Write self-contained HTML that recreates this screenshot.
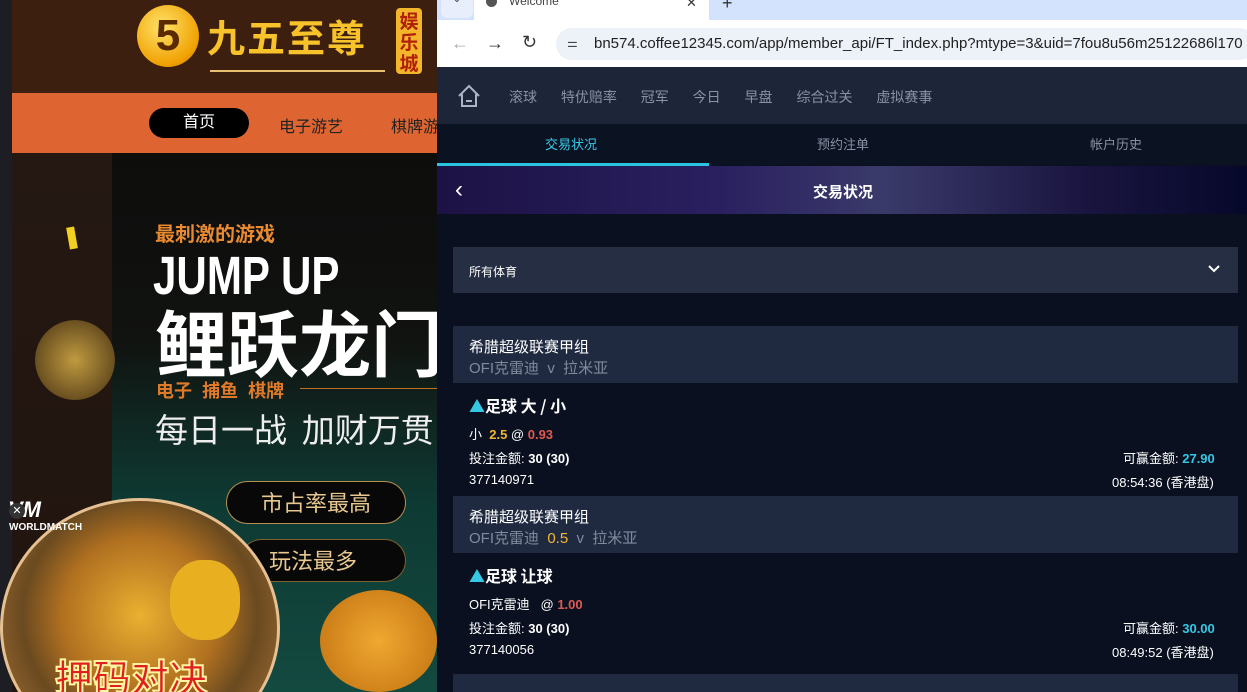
<!DOCTYPE html><html><head><meta charset="utf-8"><style>
*{margin:0;padding:0;box-sizing:border-box}
html,body{width:1247px;height:692px;overflow:hidden}
body{position:relative;background:#0a1020;font-family:"Liberation Sans","Noto Sans CJK SC",sans-serif}
.a{position:absolute}
.r{color:#fff;font-size:13px}
#L{position:absolute;left:0;top:0;width:437px;height:692px;overflow:hidden}
</style></head><body>
<div id="L">
<div class="a" style="left:0;top:0;width:12px;height:692px;background:#1c1e24"></div>
<div class="a" style="left:12px;top:0;width:425px;height:93px;background:#3d1f10"></div>
<div class="a" style="left:137px;top:5px;width:62px;height:62px;border-radius:50%;background:radial-gradient(circle at 40% 35%,#ffe36a,#f0a000 70%,#c07000);color:#5a2a00;font:bold 44px 'Liberation Sans';text-align:center;line-height:62px">5</div>
<div class="a" style="left:207px;top:14px;font:bold 38px 'Noto Sans CJK SC',sans-serif;color:#f7c22a;letter-spacing:2px;line-height:44px">九五至尊</div>
<div class="a" style="left:396px;top:8px;width:26px;height:66px;background:#f3b52a;border-radius:4px;color:#b0200a;font:bold 19px 'Noto Sans CJK SC',sans-serif;line-height:21px;text-align:center;padding-top:2px">娱<br>乐<br>城</div>
<div class="a" style="left:210px;top:70px;width:175px;height:2px;background:#e8c070"></div>
<div class="a" style="left:12px;top:93px;width:425px;height:60px;background:#de6532"></div>
<div class="a" style="left:149px;top:108px;width:100px;height:30px;border-radius:15px;background:#000;color:#fff;font-size:16px;text-align:center;line-height:30px">首页</div>
<div class="a" style="left:279px;top:113px;font-size:16px;color:#222">电子游艺</div>
<div class="a" style="left:391px;top:113px;font-size:16px;color:#222;white-space:nowrap">棋牌游戏</div>
<div class="a" style="left:12px;top:153px;width:100px;height:539px;background:linear-gradient(#251812,#20140e)"></div>
<div class="a" style="left:112px;top:153px;width:325px;height:539px;background:linear-gradient(180deg,#0d0d0c 0%,#111310 35%,#0e3a33 65%,#134a40 100%)"></div>
<div class="a" style="left:68px;top:227px;width:8px;height:22px;background:#f2d021;transform:rotate(-10deg)"></div>
<div class="a" style="left:35px;top:320px;width:80px;height:80px;border-radius:50%;background:radial-gradient(circle,#c09a40,#6a5020 70%,transparent 72%)"></div>
<div class="a" style="left:155px;top:218px;font:bold 20px 'Noto Sans CJK SC',sans-serif;color:#e98a30">最刺激的游戏</div>
<div class="a" style="left:153px;top:248px;font:bold 54px 'Liberation Sans Narrow','Liberation Sans',sans-serif;color:#fff;transform:scaleX(.78);transform-origin:left;line-height:56px">JUMP UP</div>
<div class="a" style="left:155px;top:300px;font:bold 72px 'Noto Sans CJK SC',sans-serif;color:#fff;line-height:80px;white-space:nowrap">鲤跃龙门</div>
<div class="a" style="left:156px;top:377px;font:bold 18px 'Noto Sans CJK SC',sans-serif;color:#e07a28;word-spacing:6px">电子 捕鱼 棋牌</div>
<div class="a" style="left:300px;top:388px;width:137px;height:1px;background:#c07020"></div>
<div class="a" style="left:155px;top:405px;font:33px 'Noto Sans CJK SC',sans-serif;color:#eee;white-space:nowrap;line-height:46px">每日一战&nbsp; 加财万贯</div>
<div class="a" style="left:226px;top:481px;width:180px;height:43px;border-radius:22px;background:#080808;border:1px solid #b89050;color:#e8c890;font:22px 'Noto Sans CJK SC',sans-serif;text-align:center;line-height:41px">市占率最高</div>
<div class="a" style="left:240px;top:539px;width:166px;height:43px;border-radius:22px;background:#080808;border:1px solid #806030;color:#e8c890;font:22px 'Noto Sans CJK SC',sans-serif;line-height:41px;padding-left:28px">玩法最多</div>
<div class="a" style="left:0;top:498px;width:280px;height:260px;border-radius:50%;background:radial-gradient(circle at 50% 45%,#e9b030,#b07020 40%,#6a4a20 60%,#c08040 100%);border:3px solid #e6c090"></div>
<div class="a" style="left:170px;top:560px;width:70px;height:80px;border-radius:45%;background:#e8b020"></div>
<div class="a" style="left:320px;top:590px;width:117px;height:102px;border-radius:50%;background:radial-gradient(circle,#f0a830,#c07010)"></div>
<div class="a" style="left:55px;top:648px;font:bold 38px 'Noto Sans CJK SC',sans-serif;color:#e02020;-webkit-text-stroke:2px #fff4a0">押码对决</div>
<div class="a" style="left:8px;top:500px;font:bold italic 22px 'Liberation Sans';color:#fff;line-height:20px">VM</div>
<div class="a" style="left:9px;top:522px;font:bold 10px 'Liberation Sans';color:#fff">WORLDMATCH</div>
<div class="a" style="left:9px;top:503px;width:16px;height:16px;border-radius:50%;background:#333;color:#fff;font-size:11px;text-align:center;line-height:16px">✕</div>
</div>
<div class="a" style="left:437px;top:0;width:810px;height:20px;background:#d3e3fd"></div>
<div class="a" style="left:441px;top:-6px;width:32px;height:24px;background:#e8eefb;border-radius:6px;font-size:10px;text-align:center;color:#333">⌄</div>
<div class="a" style="left:474px;top:0;width:235px;height:20px;background:#fff"></div>
<div class="a" style="left:486px;top:-4px;width:11px;height:11px;border-radius:50%;background:#555"></div>
<div class="a" style="left:509px;top:-6px;font-size:12px;color:#444">Welcome</div>
<div class="a" style="left:686px;top:-5px;font-size:13px;color:#333">✕</div>
<div class="a" style="left:722px;top:-7px;font-size:18px;color:#333">+</div>
<div class="a" style="left:437px;top:20px;width:810px;height:47px;background:#fff"></div>
<div class="a" style="left:451px;top:33px;font-size:18px;color:#aaa">←</div>
<div class="a" style="left:486px;top:33px;font-size:18px;color:#333">→</div>
<div class="a" style="left:522px;top:32px;font-size:18px;color:#333">↻</div>
<div class="a" style="left:556px;top:28px;width:700px;height:32px;border-radius:16px;background:#edf1f8"></div>
<div class="a" style="left:567px;top:36px;font-size:12px;color:#444">⚌</div>
<div class="a" style="left:594px;top:35px;font-size:15px;color:#222;white-space:nowrap">bn574.coffee12345.com/app/member_api/FT_index.php?mtype=3&amp;uid=7fou8u56m25122686l170</div>
<div class="a" style="left:437px;top:67px;width:810px;height:57px;background:#1d2638"></div>
<svg class="a" style="left:457px;top:84px" width="24" height="24" viewBox="0 0 24 24" fill="none" stroke="#aab4c4" stroke-width="2"><path d="M2 12L12 2l10 10M5 10v12h14V10M9 17h6"/></svg>
<div class="a" style="left:509px;top:87px;font-size:14px;color:#8892a4;word-spacing:20px;white-space:nowrap">滚球 特优赔率 冠军 今日 早盘 综合过关 虚拟赛事</div>
<div class="a" style="left:437px;top:124px;width:810px;height:41px;background:#0b1322"></div>
<div class="a" style="left:437px;top:163px;width:272px;height:3px;background:#2bc4e0"></div>
<div class="a" style="left:545px;top:134px;font-size:13px;color:#3ac9e6">交易状况</div>
<div class="a" style="left:817px;top:134px;font-size:13px;color:#8892a4">预约注单</div>
<div class="a" style="left:1090px;top:134px;font-size:13px;color:#8892a4">帐户历史</div>
<div class="a" style="left:437px;top:166px;width:810px;height:48px;background:linear-gradient(90deg,#1c1245,#2a2060 35%,#3a3a6a 55%,#1a1540 80%,#06082a)"></div>
<div class="a" style="left:455px;top:176px;font-size:24px;color:#fff">‹</div>
<div class="a" style="left:813px;top:181px;font:bold 15px 'Noto Sans CJK SC',sans-serif;color:#fff">交易状况</div>
<div class="a" style="left:453px;top:247px;width:785px;height:46px;background:#252e42"></div>
<div class="a" style="left:469px;top:263px;font-size:12px;color:#fff">所有体育</div>
<svg class="a" style="left:1207px;top:264px" width="14" height="10" viewBox="0 0 14 10"><path d="M2 2l5 5 5-5" stroke="#fff" stroke-width="2" fill="none"/></svg>
<div class="a" style="left:453px;top:326px;width:785px;height:57px;background:#1f2a40"></div>
<div class="a" style="left:469px;top:336px;font-size:15px;color:#fff">希腊超级联赛甲组</div>
<div class="a" style="left:469px;top:357px;font-size:15px;color:#7f8a9c;white-space:pre">OFI克雷迪  v  拉米亚</div>
<div class="a" style="left:469px;top:393px;font:bold 16px 'Noto Sans CJK SC',sans-serif;color:#fff"><span style="color:#35c8e4">▲</span>足球 大 / 小</div>
<div class="a r" style="left:469px;top:424px">小 &nbsp;<b style="color:#f2b630">2.5</b> @ <b style="color:#e05a50">0.93</b></div>
<div class="a r" style="left:469px;top:448px">投注金额: <b>30 (30)</b></div>
<div class="a r" style="left:1123px;top:448px">可赢金额: <b style="color:#35c8e4">27.90</b></div>
<div class="a r" style="left:469px;top:472px">377140971</div>
<div class="a r" style="left:1112px;top:472px">08:54:36 (香港盘)</div>
<div class="a" style="left:453px;top:496px;width:785px;height:57px;background:#1f2a40"></div>
<div class="a" style="left:469px;top:506px;font-size:15px;color:#fff">希腊超级联赛甲组</div>
<div class="a" style="left:469px;top:527px;font-size:15px;color:#7f8a9c;white-space:pre">OFI克雷迪  <span style="color:#f2b630">0.5</span>  v  拉米亚</div>
<div class="a" style="left:469px;top:563px;font:bold 16px 'Noto Sans CJK SC',sans-serif;color:#fff"><span style="color:#35c8e4">▲</span>足球 让球</div>
<div class="a r" style="left:469px;top:594px">OFI克雷迪 &nbsp; @ <b style="color:#e05a50">1.00</b></div>
<div class="a r" style="left:469px;top:618px">投注金额: <b>30 (30)</b></div>
<div class="a r" style="left:1123px;top:618px">可赢金额: <b style="color:#35c8e4">30.00</b></div>
<div class="a r" style="left:469px;top:642px">377140056</div>
<div class="a r" style="left:1112px;top:642px">08:49:52 (香港盘)</div>
<div class="a" style="left:453px;top:674px;width:785px;height:20px;background:#1f2a40"></div>
</body></html>
